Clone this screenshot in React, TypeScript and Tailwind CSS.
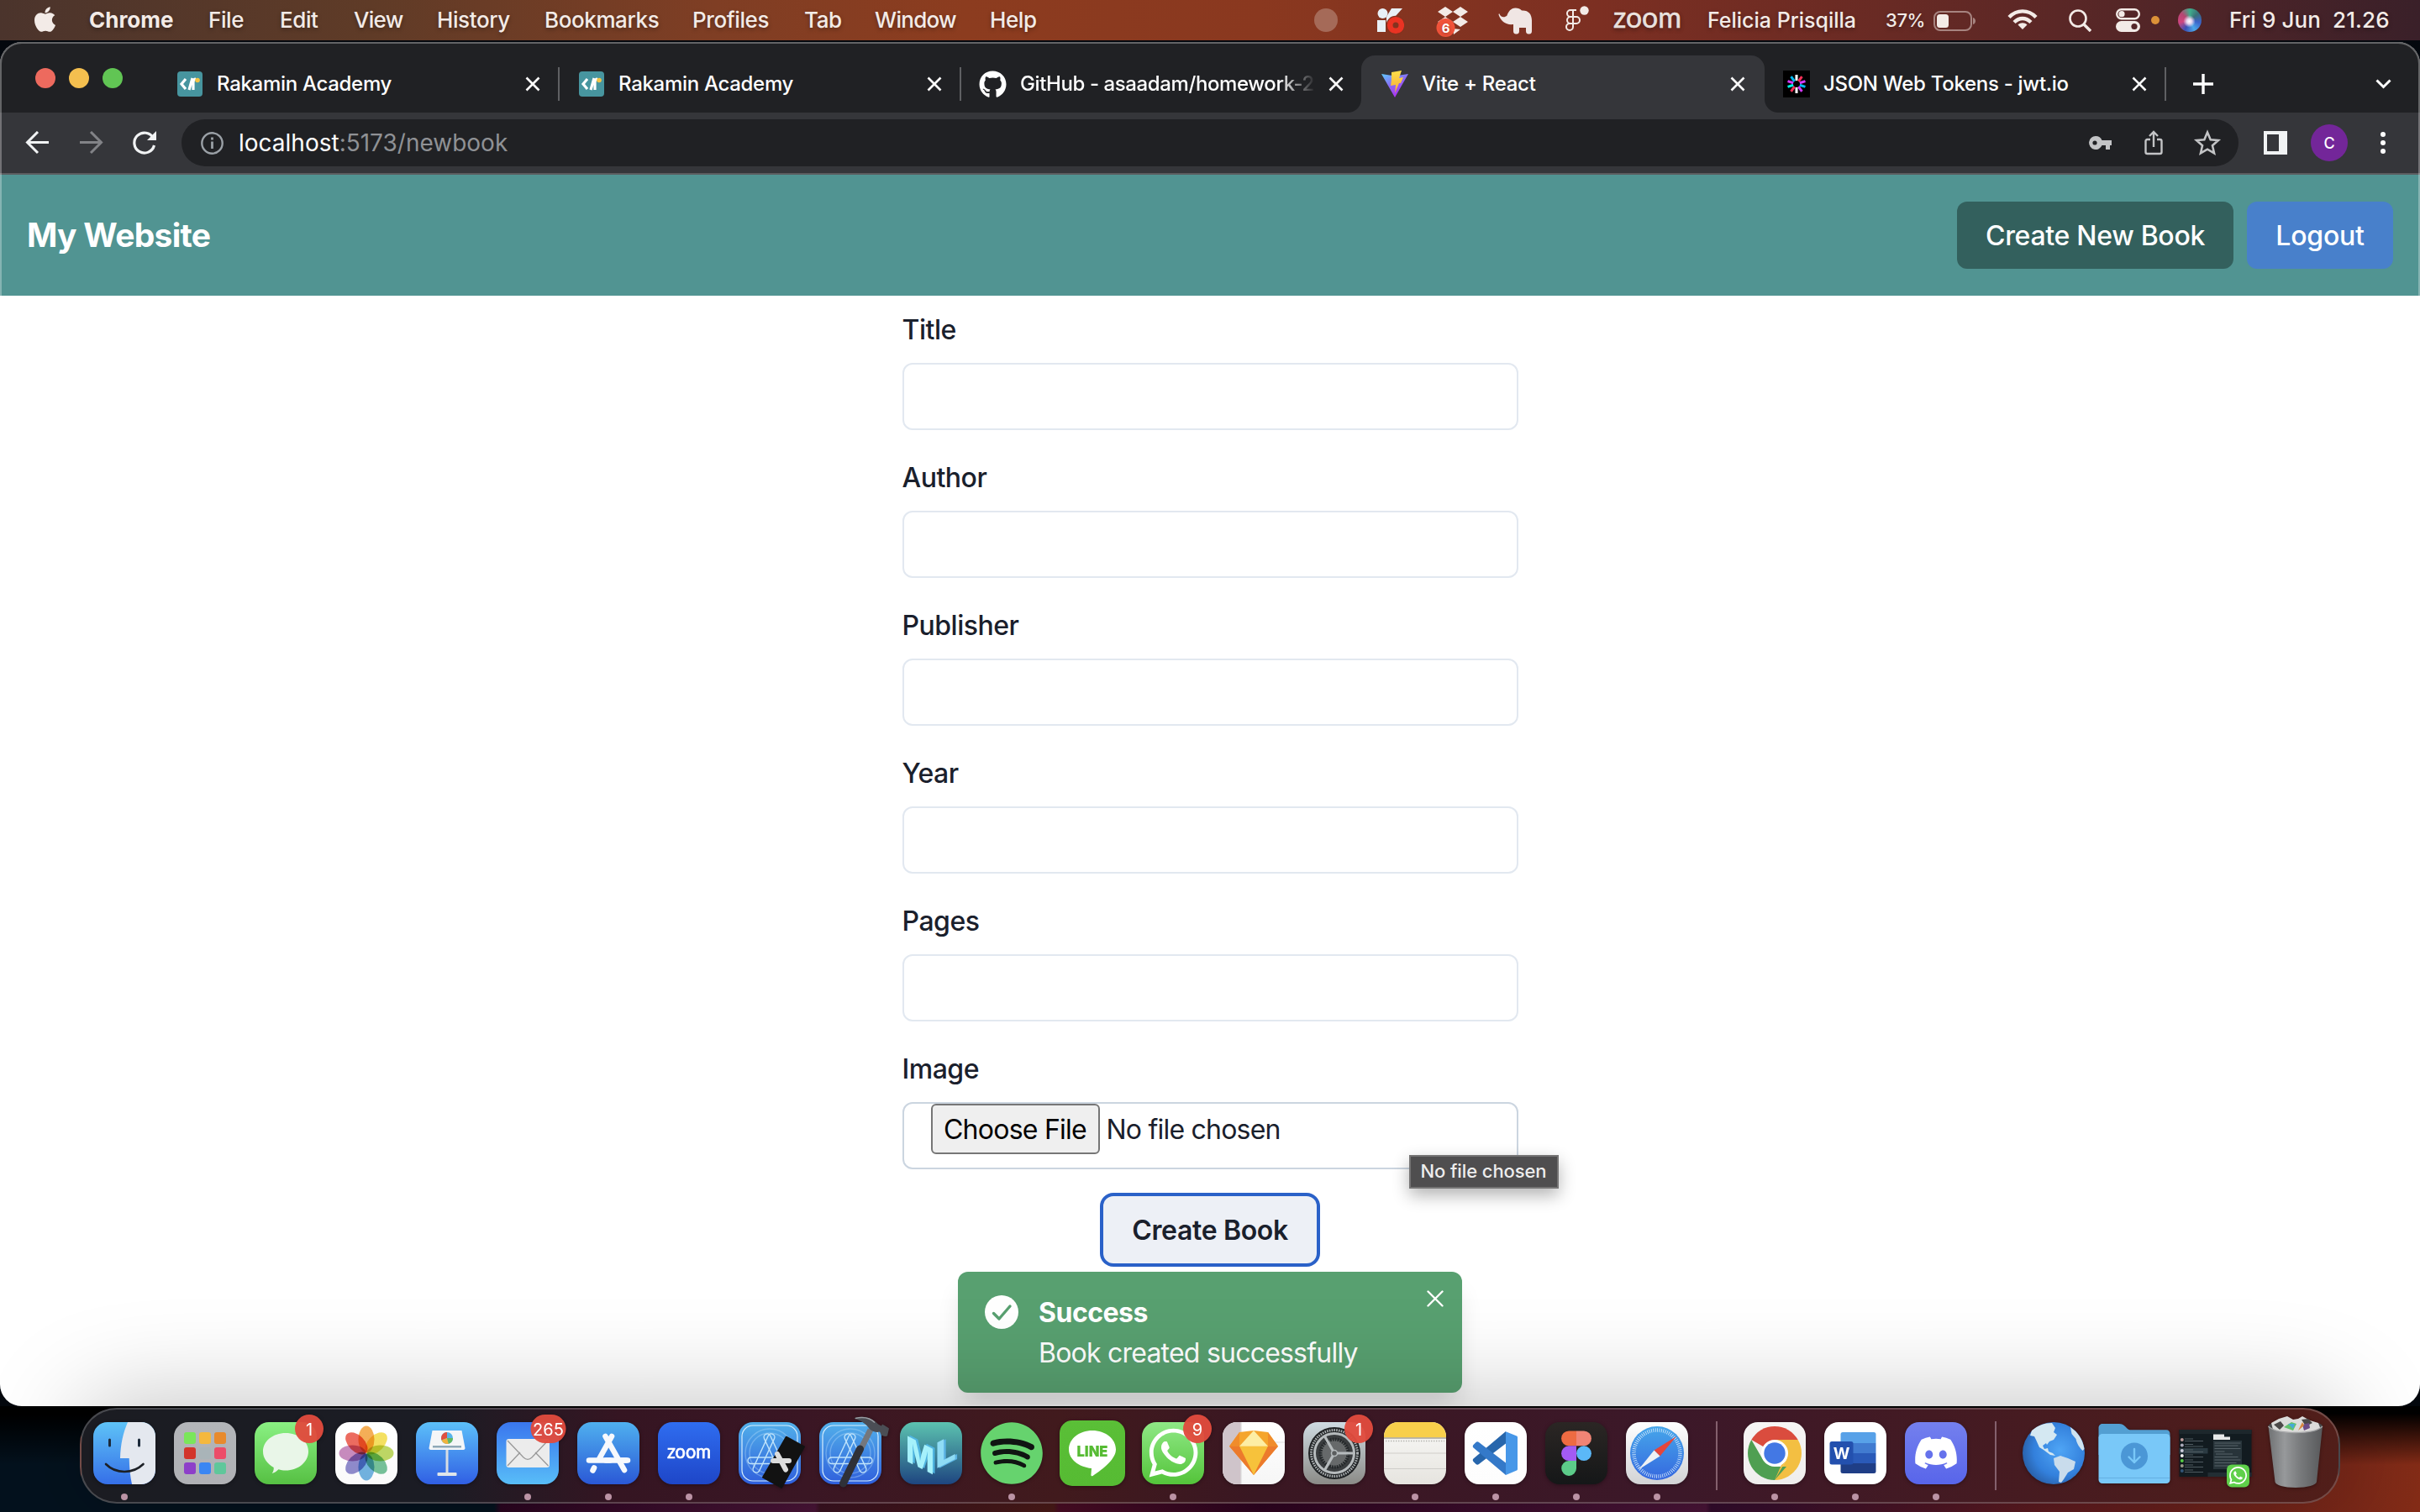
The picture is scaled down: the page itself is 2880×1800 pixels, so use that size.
import React from "react";
import { FaApple, FaGithub, FaSpotify, FaDiscord, FaWhatsapp } from "react-icons/fa";

/* ---------- shared drawing helpers ---------- */

function Tile({ id, a, b, x = 11, s = 74, r = 17 }: { id: string; a: string; b: string; x?: number; s?: number; r?: number }) {
  return (
    <>
      <defs>
        <linearGradient id={id} x1="0" y1="0" x2="0" y2="1">
          <stop offset="0" stopColor={a} />
          <stop offset="1" stopColor={b} />
        </linearGradient>
      </defs>
      <rect x={x} y={x} width={s} height={s} rx={r} fill={`url(#${id})`} />
    </>
  );
}

function Close() {
  return (
    <svg className="h-[18px] w-[18px] shrink-0" viewBox="0 0 18 18" stroke="#fff" strokeWidth="2.6" fill="none">
      <path d="M1.5 1.5 16.5 16.5M16.5 1.5 1.5 16.5" />
    </svg>
  );
}

/* ---------- menu bar ---------- */

function MenuBar() {
  return (
    <header className="flex h-12 shrink-0 items-start bg-[linear-gradient(90deg,#4b342c_0px,#5f3b27_440px,#7f3e24_850px,#8c3c1f_1150px,#8a381f_1500px,#7c2f22_1900px,#682a24_2250px,#4c2428_2650px,#3a2029_2880px)] text-[26px] font-medium tracking-[-0.4px] text-[#f3ebe7] [text-shadow:0_2px_5px_rgba(0,0,0,.35)]">
      <div className="flex h-[46px] w-full items-center whitespace-nowrap">
        <div className="w-[105px] pl-[38px]">
          <FaApple className="h-[34px] w-[31px]" />
        </div>
        <span className="w-[143px] pl-px font-bold tracking-normal">Chrome</span>
        <span className="w-[85px]">File</span>
        <span className="w-[88px]">Edit</span>
        <span className="w-[99px] tracking-[-0.7px]">View</span>
        <span className="w-[128px]">History</span>
        <span className="w-[176px]">Bookmarks</span>
        <span className="w-[133px]">Profiles</span>
        <span className="w-[84px]">Tab</span>
        <span className="w-[137px] tracking-[-0.7px]">Window</span>
        <span className="w-[386px]">Help</span>
        <div className="w-[75px]"><div className="mt-[2px] h-7 w-7 rounded-full bg-[#a56a58]" /></div>
        <div className="w-[70px]">
          <svg className="mt-[4px] h-[32px] w-[32px]" viewBox="0 0 32 32">
            <circle cx="6.5" cy="7" r="6" fill="#e8f0f6" />
            <path d="M0 15h10v14H0zM17 1h13l-8 9-11 8v-7z" fill="#e8f0f6" />
            <circle cx="22" cy="21" r="11.2" fill="#84321f" />
            <circle cx="22" cy="21" r="6.8" fill="none" stroke="#ea3323" strokeWidth="6.6" />
          </svg>
        </div>
        <div className="w-[74px]">
          <svg className="mt-[5px] h-[38px] w-[40px]" viewBox="0 0 40 38">
            <path d="m11 1 9 6-9 6-9-6zM29 1l9 6-9 6-9-6zM29 13l9 6-9 6-9-6zM11 13l9 6-9 6-9-6zM20 27l9 1-8 6z" fill="#f3ebe7" />
            <circle cx="11.5" cy="26" r="11" fill="#f1533a" />
            <text x="11.5" y="31.5" fontFamily="Inter" fontSize="15" fontWeight="700" fill="#fff" textAnchor="middle">6</text>
          </svg>
        </div>
        <div className="w-[79px]">
          <svg className="mt-[3px] h-[34px] w-[42px]" viewBox="0 0 42 34" fill="#f0e6e4">
            <path d="M1.5 8.5c1 4 6 5 9 2C12 6 15 1.5 20.5 1.5c3 0 6 1 7.5 3 8-.5 12 4.500 12 12V29c0 2-1 3.500-3 3.500h-1c-2 0-3-1.500-3-3.500v-4h-8v4c0 2-1 3.500-3 3.500h-1c-2 0-3-1.500-3-3.500v-8C9 22 3 17 .5 9.500c0-1 .6-1.800 1-1z" />
          </svg>
        </div>
        <div className="w-[58px]">
          <svg className="h-[34px] w-[30px]" viewBox="0 0 30 34" fill="none" stroke="#f3ebe7" strokeWidth="2">
            <path d="M14 6H7a4 4 0 0 0 0 8h7M10 6v20a4 4 0 1 1-4-4h4M14 14H7a4 4 0 0 0 0 8h7a4 4 0 0 0 0-8z" />
            <circle cx="23.5" cy="6.5" r="5.2" fill="#f3ebe7" stroke="none" />
          </svg>
        </div>
        <div className="w-[112px]">
          <svg className="h-[46px] w-[92px] overflow-visible" viewBox="0 0 92 46">
            <text x="0" y="33" fontFamily="Lato" fontSize="35" fontWeight="400" fill="#f3ebe7" stroke="#f3ebe7" strokeWidth=".5" letterSpacing="0" textLength="81" lengthAdjust="spacingAndGlyphs">zoom</text>
          </svg>
        </div>
        <span className="mt-[4px] w-[212px] text-[25px] tracking-normal">Felicia Prisqilla</span>
        <span className="mt-[3px] w-[57px] text-[22px]">37%</span>
        <div className="w-[88px]">
          <svg className="mt-[3px] h-[24px] w-[52px]" viewBox="0 0 52 24">
            <rect x="1" y="1" width="44" height="22" rx="7" fill="none" stroke="#a78480" strokeWidth="2" />
            <rect x="4" y="4" width="14" height="16" rx="3.5" fill="#f3ebe7" />
            <path d="M47 8c4 1 4 7 0 8z" fill="#a78480" />
          </svg>
        </div>
        <div className="w-[73px]">
          <svg className="h-[26px] w-[36px]" viewBox="0 0 36 26" fill="none" stroke="#f3ebe7" strokeWidth="4.4">
            <path d="M2 10.5C11 1 25 1 34 10.5M8 16.5c6-6 14-6 20 0" />
            <path d="m18 25-5.500-5.500c3-3 8-3 11 0z" fill="#f3ebe7" stroke="none" />
          </svg>
        </div>
        <div className="w-[56px]">
          <svg className="mt-[2px] h-[27px] w-[27px]" viewBox="0 0 27 27" fill="none" stroke="#f3ebe7" strokeWidth="2.6">
            <circle cx="11" cy="11" r="9.5" />
            <path d="m17.500 17.500 8.500 8.500" strokeWidth="3.4" />
          </svg>
        </div>
        <div className="w-[42px]">
          <svg className="mt-[1px] h-[28px] w-[29px]" viewBox="0 0 29 28">
            <rect x="1.200" y="1.200" width="26.600" height="11" rx="5.500" fill="none" stroke="#f3ebe7" strokeWidth="2.4" />
            <circle cx="7" cy="6.700" r="3.600" fill="#f3ebe7" />
            <rect y="15" width="29" height="13" rx="6.500" fill="#f3ebe7" />
            <circle cx="22" cy="21.500" r="3.600" fill="#55282a" />
          </svg>
        </div>
        <div className="w-[32px]"><div className="mt-[2px] h-[10px] w-[10px] rounded-full bg-[#dc9238]" /></div>
        <div className="w-[61px]">
          <div className="mt-[2px] h-7 w-7 rounded-full bg-[radial-gradient(circle_at_48%_55%,#fff_0,#e7d5ee_14%,transparent_34%),conic-gradient(from_0deg,#3fae8c,#3a6f78,#3b62c9,#4aa6e8,#3b51b5,#d0457f,#b54672,#3fae8c)]" />
        </div>
        <span className="tracking-[0.1px]">Fri 9 Jun&nbsp; 21.26</span>
      </div>
    </header>
  );
}

/* ---------- browser chrome ---------- */

function RakaminIcon() {
  return (
    <svg className="h-[30px] w-[30px] shrink-0" viewBox="0 0 30 30">
      <rect width="30" height="30" rx="4" fill="#47959f" />
      <path d="m10 9-5 6 5 6M18 8l-4 14M19 22v-9c0-3 1-4 3-4" fill="none" stroke="#fff" strokeWidth="3.2" />
      <circle cx="24" cy="10.5" r="2.8" fill="#f3c344" />
    </svg>
  );
}

function ViteIcon() {
  return (
    <svg className="h-8 w-8 shrink-0" viewBox="0 0 32 32">
      <defs>
        <linearGradient id="vt" x1="0" y1="0" x2=".6" y2="1"><stop stopColor="#5ecbff" /><stop offset=".5" stopColor="#8a6cf5" /><stop offset="1" stopColor="#b02bf0" /></linearGradient>
        <linearGradient id="vb" x1="0" y1="0" x2="0" y2="1"><stop stopColor="#ffe14a" /><stop offset="1" stopColor="#f5a83a" /></linearGradient>
      </defs>
      <path d="M0 4 16 6.500 32 4 16 32z" fill="url(#vt)" />
      <path d="M12 2 24 0l-3 9 5-1-3 7h-2l-5 12 1-10-6 1 1-7z" fill="url(#vb)" />
    </svg>
  );
}

function JwtIcon() {
  const c = ["#fff", "#fb3159", "#d63aff", "#00b9f1", "#d63aff", "#fff", "#fb3159", "#00f2e6", "#d63aff", "#00b9f1"];
  return (
    <svg className="h-8 w-8 shrink-0" viewBox="0 0 32 32">
      <rect width="32" height="32" fill="#000" />
      {c.map((k, i) => (
        <path key={i} d="M16 12V5" stroke={k} strokeWidth="3" transform={`rotate(${i * 36} 16 16)`} />
      ))}
    </svg>
  );
}

function TabStrip() {
  return (
    <div className="flex h-[84px] items-end bg-[#202124] text-[24px] font-medium tracking-[-0.3px] text-white">
      <div className="flex h-[82px] w-[188px] shrink-0 items-center gap-4 pl-[42px]">
        <span className="h-6 w-6 rounded-full bg-[#ed6a5e]" />
        <span className="h-6 w-6 rounded-full bg-[#f4bf4f]" />
        <span className="h-6 w-6 rounded-full bg-[#61c554]" />
      </div>
      <div className="flex h-[68px] w-[478px] shrink-0 items-center pl-[23px]">
        <RakaminIcon />
        <span className="ml-[17px] w-[367px] whitespace-nowrap">Rakamin Academy</span>
        <Close />
        <span className="ml-[21px] h-10 w-[2px] bg-[#5f6063]" />
      </div>
      <div className="flex h-[68px] w-[478px] shrink-0 items-center pl-[23px]">
        <RakaminIcon />
        <span className="ml-[17px] w-[367px] whitespace-nowrap">Rakamin Academy</span>
        <Close />
        <span className="ml-[21px] h-10 w-[2px] bg-[#5f6063]" />
      </div>
      <div className="flex h-[68px] w-[476px] shrink-0 items-center pl-[21px]">
        <FaGithub className="h-[33px] w-[33px] shrink-0" />
        <span className="mr-[11px] ml-[16px] w-[356px] overflow-hidden whitespace-nowrap tracking-[-0.4px] [mask-image:linear-gradient(90deg,#000_308px,transparent_352px)]">
          GitHub - asaadam/homework-2
        </span>
        <Close />
      </div>
      <div className="relative flex h-[68px] w-[480px] shrink-0 items-center rounded-t-2xl bg-[#35363a] pl-6">
        <span className="absolute bottom-0 left-[-16px] h-4 w-4 bg-[radial-gradient(circle_at_0_0,#202124_15.5px,#35363a_16.5px)]" />
        <span className="absolute right-[-16px] bottom-0 h-4 w-4 bg-[radial-gradient(circle_at_100%_0,#202124_15.5px,#35363a_16.5px)]" />
        <ViteIcon />
        <span className="ml-[16px] w-[367px] whitespace-nowrap">Vite + React</span>
        <Close />
      </div>
      <div className="flex h-[68px] w-[478px] shrink-0 items-center pl-[22px]">
        <JwtIcon />
        <span className="ml-[16px] w-[367px] whitespace-nowrap">JSON Web Tokens - jwt.io</span>
        <Close />
        <span className="ml-[21px] h-10 w-[2px] bg-[#5f6063]" />
      </div>
      <div className="flex h-[68px] flex-1 items-center justify-between pr-[34px] pl-8">
        <svg className="h-6 w-6" viewBox="0 0 24 24" stroke="#fff" strokeWidth="3.4"><path d="M12 0v24M0 12h24" /></svg>
        <svg className="h-[12px] w-[19px]" viewBox="0 0 19 12" fill="none" stroke="#fff" strokeWidth="3"><path d="m1.500 1.500 8 8 8-8" /></svg>
      </div>
    </div>
  );
}

function Toolbar() {
  return (
    <div className="flex h-[74px] items-center border-b-2 border-[#5c5d60] bg-[#35363a]">
      <svg className="ml-[30px] h-7 w-7" viewBox="0 0 28 28" fill="none" stroke="#f1f3f4" strokeWidth="3"><path d="M28 13.500H3M15 1 2.500 13.500 15 26" /></svg>
      <svg className="ml-[37px] h-7 w-7" viewBox="0 0 28 28" fill="none" stroke="#828387" strokeWidth="3"><path d="M0 13.500h25M13 1l12.500 12.500L13 26" /></svg>
      <svg className="ml-[35px] h-7 w-7" viewBox="0 0 28 28" fill="none" stroke="#f1f3f4" strokeWidth="3.2"><path d="M24.500 8.500A12 12 0 1 0 25.500 17" /><path d="M28 0v11H17z" fill="#f1f3f4" stroke="none" /></svg>
      <div className="ml-[30px] flex h-14 w-[2448px] items-center rounded-full bg-[#202124] pr-[20px] pl-[23px]">
        <svg className="h-[27px] w-[27px]" viewBox="0 0 27 27" fill="none" stroke="#9aa0a6" strokeWidth="2.4"><circle cx="13.500" cy="13.500" r="12.200" /><path d="M13.500 11.500V20M13.500 6.500v3" strokeWidth="2.8" /></svg>
        <span className="ml-[18px] text-[28px] whitespace-nowrap text-[#8f9195]">
          <span className="text-white">localhost</span>:5173/newbook
        </span>
        <div className="ml-auto flex items-center">
          <svg className="h-[18px] w-[28px]" viewBox="0 0 28 18" fill="#c3c4c6"><path fillRule="evenodd" d="M9 1a8 8 0 1 0 7.500 11H21v5h5v-5h2V6H16.500A8 8 0 0 0 9 1zm-1 5.400a2.600 2.600 0 1 1 0 5.200 2.600 2.600 0 0 1 0-5.200z" /></svg>
          <svg className="ml-[39px] h-[30px] w-[22px]" viewBox="0 0 22 30" fill="none" stroke="#c3c4c6" strokeWidth="2.4"><path d="M7 11H3.500a2 2 0 0 0-2 2v13a2 2 0 0 0 2 2h15a2 2 0 0 0 2-2V13a2 2 0 0 0-2-2H15M11 20V2.500M6 7l5-5 5 5" /></svg>
          <svg className="ml-[36px] h-[34px] w-[34px]" viewBox="0 0 24 24" fill="none" stroke="#c3c4c6" strokeWidth="1.8"><path d="m12 3.200 2.600 6.100 6.600.6-5 4.400 1.500 6.500-5.700-3.400-5.700 3.400 1.500-6.500-5-4.400 6.600-.6z" /></svg>
        </div>
      </div>
      <svg className="ml-[30px] h-7 w-7" viewBox="0 0 28 28"><path fillRule="evenodd" d="M0 0h28v28H0zM4 4v20h14V4z" fill="#f1f3f4" /></svg>
      <span className="ml-[28px] flex h-11 w-11 items-center justify-center rounded-full bg-[#732699] text-[18px] font-medium text-white">C</span>
      <span className="ml-[39px] flex flex-col gap-1">
        <i className="h-[6px] w-[6px] rounded-full bg-white" />
        <i className="h-[6px] w-[6px] rounded-full bg-white" />
        <i className="h-[6px] w-[6px] rounded-full bg-white" />
      </span>
    </div>
  );
}

/* ---------- page ---------- */

function Field({ label, children, file }: { label: string; children?: React.ReactNode; file?: boolean }) {
  return (
    <div className="flex flex-col gap-4">
      <label className="h-12 pt-px text-[32px] leading-[48px] font-medium tracking-[-0.5px] text-[#1a202c]">{label}</label>
      <div className={file ? "relative flex h-20 items-start rounded-xl border-2 border-[#cbd5e0] pl-8" : "h-20 rounded-xl border-2 border-[#e2e8f0]"}>{children}</div>
    </div>
  );
}

function BookForm() {
  return (
    <form className="mx-auto mt-4 flex w-[733px] flex-col gap-8">
      {["Title", "Author", "Publisher", "Year", "Pages"].map((l) => (
        <Field key={l} label={l} />
      ))}
      <Field label="Image" file>
        <span className="flex h-[60px] w-[201px] items-center justify-center rounded-md border-2 border-[#767676] bg-[#efefef] pt-[2px] text-[32px] tracking-[-0.75px] whitespace-nowrap text-black">Choose File</span>
        <span className="ml-[8px] flex h-[60px] items-center pt-[2px] text-[32px] tracking-[-0.78px] whitespace-nowrap text-[#1a202c]">No file chosen</span>
        <span className="absolute top-[61px] left-[601px] flex h-10 w-[178px] items-center justify-center border-2 border-[#757474] bg-[#4f4e4f] pb-px text-[22px] font-medium tracking-[-0.1px] whitespace-nowrap text-[#ededed] shadow-[0_8px_20px_rgba(0,0,0,.3)]">
          No file chosen
        </span>
      </Field>
      <button type="button" className="mx-auto h-20 w-[254px] rounded-xl bg-[#edf0f6] pt-[2px] text-[32px] font-semibold tracking-[-0.35px] text-[#1a202c] shadow-[0_0_0_4px_#2a61c8]">Create Book</button>
    </form>
  );
}

function Toast() {
  return (
    <div className="absolute top-[1464px] left-[1140px] flex h-[144px] w-[600px] rounded-xl bg-[#58a070] pt-6 pl-8 text-white shadow-[0_20px_30px_-6px_rgba(0,0,0,.14)]">
      <svg className="mt-[4px] h-10 w-10" viewBox="0 0 40 40"><circle cx="20" cy="20" r="20" fill="#fff" /><path d="m10.500 21.500 6.500 6.500 13-15" fill="none" stroke="#58a070" strokeWidth="3.4" strokeLinecap="round" strokeLinejoin="round" /></svg>
      <div className="ml-6 pt-px text-[32px] leading-[48px] whitespace-nowrap">
        <p className="font-bold tracking-[-0.5px]">Success</p>
        <p className="tracking-[-0.78px]">Book created successfully</p>
      </div>
      <svg className="absolute top-[22px] right-[22px] h-5 w-5" viewBox="0 0 20 20" stroke="#fff" strokeWidth="2.4" strokeLinecap="round"><path d="m1.500 1.500 17 17M18.500 1.500l-17 17" /></svg>
    </div>
  );
}

function BrowserWindow() {
  return (
    <main className="relative mt-[2px] flex h-[1624px] shrink-0 flex-col overflow-hidden rounded-[26px] bg-white">
      <TabStrip />
      <Toolbar />
      <nav className="flex h-[144px] shrink-0 items-center bg-[#519492] pr-8 pl-8 text-white">
        <span className="pt-px text-[39px] font-bold tracking-[-0.7px]">My Website</span>
        <button type="button" className="ml-auto h-20 w-[329px] rounded-xl bg-[#33605d] pt-[2px] text-[32px] font-medium tracking-[-0.3px]">Create New Book</button>
        <button type="button" className="ml-4 h-20 w-[174px] rounded-xl bg-[#4880cb] pt-[2px] text-[32px] font-medium tracking-[-0.2px]">Logout</button>
      </nav>
      <BookForm />
      <Toast />
      <div className="pointer-events-none absolute inset-0 rounded-[26px] border-2 border-white/30" />
    </main>
  );
}

/* ---------- dock ---------- */

function Badge({ n, w = 34, x = 66 }: { n: string; w?: number; x?: number }) {
  return (
    <>
      <rect x={x + 11 - w / 2} y="2" width={w} height="34" rx="17" fill="#e14b3d" opacity=".96" />
      <text x={x + 11} y="26.500" fontFamily="Inter" fontSize="20" fill="#fff" textAnchor="middle">{n}</text>
    </>
  );
}

function BlueprintA() {
  return (
    <g fill="none" stroke="#bfe3fb" strokeWidth="1.4">
      <rect x="15" y="15" width="66" height="66" rx="13" stroke="#d8effd" strokeWidth="1.2" />
      <circle cx="48" cy="48" r="29" opacity=".35" />
      <circle cx="48" cy="48" r="24" opacity=".35" />
      <g strokeLinejoin="round">
        <rect x="-4" y="-25" width="8" height="50" rx="4" transform="translate(41 48) rotate(25)" />
        <rect x="-4" y="-25" width="8" height="50" rx="4" transform="translate(54 48) rotate(-25)" />
        <rect x="22" y="53" width="52" height="7.500" rx="3.700" />
      </g>
    </g>
  );
}

const launchColors = ["#7ae65a", "#f5b83e", "#e88a2d", "#d3342a", "#a9b4b8", "#ec4c68", "#8d3fc9", "#3a86f3", "#5fc79b"];
const petals = ["#f3a13a", "#f3dc45", "#b4d14a", "#5fb98a", "#5aa7dd", "#7d78c6", "#c078b4", "#ea5244"];

type DockApp = { name: string; dot?: boolean; art: React.ReactNode };

const main: DockApp[] = [
  { name: "Finder", dot: true, art: (<>
    <Tile id="d1" a="#5ec3f7" b="#356fe8" />
    <path d="M52 11h16a17 17 0 0 1 17 17v40a17 17 0 0 1-17 17H57c-2-9-3-19-3.300-31H43c.5-17 3.500-30 9-43z" fill="#e4e8ef" />
    <path d="M30.500 32v7M65.500 32v7" stroke="#1c2a3a" strokeWidth="3" strokeLinecap="round" />
    <path d="M26 61c12 12 32 12 44.500 0" fill="none" stroke="#1c2026" strokeWidth="2.6" strokeLinecap="round" />
  </>) },
  { name: "Launchpad", art: (<>
    <Tile id="d2" a="#b3b5b9" b="#b0b1b5" />
    {launchColors.map((c, i) => <rect key={c} x={23 + (i % 3) * 18} y={23 + Math.floor(i / 3) * 18} width="14" height="14" rx="3" fill={c} />)}
  </>) },
  { name: "Messages", art: (<>
    <Tile id="d3" a="#8af183" b="#56c043" />
    <path d="M48 24c15 0 27 9.500 27 22S63 68.500 48 68.500c-3 0-6-.4-8.600-1.200-2 2.200-4.600 4-7.700 4.600 1.500-2 2.300-4.300 2-7C26 60.500 21 54 21 46c0-12.500 12-22 27-22z" fill="#e9f6e8" />
    <Badge n="1" x={65} />
  </>) },
  { name: "Photos", art: (<>
    <Tile id="d4" a="#ffffff" b="#fafafa" />
    {petals.map((c, i) => <ellipse key={c} cx="48" cy="31.500" rx="9.500" ry="16" fill={c} fillOpacity=".85" className="mix-blend-multiply" transform={`rotate(${i * 45} 48 48)`} />)}
  </>) },
  { name: "Keynote", art: (<>
    <Tile id="d5" a="#5cc0f9" b="#305fe4" />
    <path d="M30.500 21h35l4 21c0 1-1 2-2 2h-39c-1 0-2-1-2-2z" fill="#f4f6f8" />
    <path d="M31 39h34v2.500H31z" fill="#8fa9b8" />
    <circle cx="48" cy="30" r="7" fill="#56b4e8" />
    <path d="M48 30v-7a7 7 0 0 0-6.500 9.500z" fill="#e0503f" /><path d="m48 30-6.500 2.500A7 7 0 0 0 50 36.700z" fill="#f0b33d" /><path d="M48 30l2 6.700a7 7 0 0 0 5-6.700z" fill="#63b860" />
    <path d="M46.500 44h3v27h-3z" fill="#d6dde4" /><rect x="36.500" y="71" width="23" height="4" rx="1" fill="#dfe5ea" />
  </>) },
  { name: "Mail", dot: true, art: (<>
    <Tile id="d6" a="#3a76ee" b="#58bdf8" />
    <rect x="22.500" y="31" width="51.500" height="34" rx="3" fill="#ececec" />
    <path d="M24 63l15-16M72.500 63 57 47M24 33l19 20c3 3 7 3 10 0l19-20" fill="none" stroke="#999" strokeWidth="1.3" />
    <Badge n="265" w={42} x={61.5} />
  </>) },
  { name: "App Store", dot: true, art: (<>
    <Tile id="d7" a="#4fb0ef" b="#2a58d6" />
    <g stroke="#f6f9fd" strokeWidth="6.6" strokeLinecap="round">
      <path d="M52 28 37.500 54M31 65.500l-1.500 3M44.500 28 67 68M25 56.500h25M61 56.500h10" /><path d="M45 56.500h24" />
    </g>
  </>) },
  { name: "Zoom", dot: true, art: (<>
    <Tile id="d8" a="#2f6df0" b="#1e46c8" />
    <text x="22" y="53.500" fontFamily="Lato" fontSize="23.500" fontWeight="400" fill="#fff" stroke="#fff" strokeWidth=".7" textLength="52" lengthAdjust="spacingAndGlyphs">zoom</text>
  </>) },
  { name: "Simulator", art: (<>
    <Tile id="d9" a="#52b0ea" b="#2f5fdc" />
    <BlueprintA />
    <path d="M67.700 28.700 89 40.300 62 89 40 76.700z" fill="#121212" stroke="#121212" strokeWidth="2" strokeLinejoin="round" />
    <path d="M57 49l10 18.500M52 57h19" stroke="#dcdcdc" strokeWidth="6" strokeLinecap="round" />
  </>) },
  { name: "Xcode", art: (<>
    <Tile id="d10" a="#52b0ea" b="#2f5fdc" />
    <BlueprintA />
    <path d="M72 20 58 48" stroke="#74777d" strokeWidth="7" />
    <path d="M59.500 43 39.500 84" stroke="#2f3138" strokeWidth="9" strokeLinecap="round" />
    <path d="M52 6.500c9-3 19-2 26 4 2 2 4 4 7 5l1-2c3 2 6 3 8 5l-2 9c-3 1-5 0-7-1l-2-4c-4 1-8 0-12-3-4-6-9-10-19-13z" fill="#4b4e55" />
    <path d="M54 6.500c9-2 17-1 23 5" fill="none" stroke="#9a9da3" strokeWidth="1.5" />
  </>) },
  { name: "Create ML", art: (<>
    <Tile id="d11" a="#5cc3b0" b="#1e4580" />
    <g fontFamily="Inter" fontWeight="800">
      <text transform="translate(20.500 56) skewY(27)" fontSize="42" fill="#4fb4e0" textLength="34" lengthAdjust="spacingAndGlyphs">M</text>
      <text transform="translate(18 57) skewY(27)" fontSize="42" fill="#a5f1fb" textLength="34" lengthAdjust="spacingAndGlyphs">M</text>
      <text transform="translate(55.500 67) skewY(-27)" fontSize="42" fill="#5cb4e4" textLength="25" lengthAdjust="spacingAndGlyphs">L</text>
      <text transform="translate(53 67) skewY(-27)" fontSize="42" fill="#8fdcf5" textLength="25" lengthAdjust="spacingAndGlyphs">L</text>
    </g>
  </>) },
  { name: "Spotify", dot: true, art: (<>
    <circle cx="48" cy="48" r="36" fill="#101512" />
    <FaSpotify x="10" y="10" size={76} color="#66d36e" />
  </>) },
  { name: "LINE", art: (<>
    <Tile id="d13" a="#5abf37" b="#56bb33" x={9} s={78} r={15} />
    <path d="M48 21c15.500 0 28 9.800 28 22.500 0 11-14 22.500-27.500 31.500-2 1-2.300-.5-2-2.500l.5-6.500C31.500 64.500 20 55 20 43.500 20 30.800 32.500 21 48 21z" fill="#fff" />
    <text x="29.500" y="51.500" fontFamily="Inter" fontSize="18" fontWeight="900" fill="#56bb33" textLength="37" lengthAdjust="spacingAndGlyphs">LINE</text>
  </>) },
  { name: "WhatsApp", dot: true, art: (<>
    <Tile id="d14" a="#8fe886" b="#54c43a" />
    <FaWhatsapp x="15.500" y="14.500" size={66} color="#fff" />
    <Badge n="9" />
  </>) },
  { name: "Sketch", art: (<>
    <Tile id="d15" a="#ffffff" b="#f6f6f6" />
    <path d="M28 11h5v74h-5a17 17 0 0 1-17-17V28a17 17 0 0 1 17-17z" fill="#cfc4ca" />
    <path d="M33 11v74M33 35h52" stroke="#ddd" strokeWidth="1.2" />
    <path d="M19 39.700 31 23l17-2 17 2 12 16.700L48 74z" fill="#f5a52c" />
    <path d="M31 39.700h34L48 74z" fill="#f7c23b" /><path d="M48 21 31 39.700h34z" fill="#fdeea4" /><path d="m31 23-12 16.700h12zM65 23l12 16.700H65z" fill="#f08c2b" />
    <path d="M19 39.700h12L48 74zM77 39.700H65L48 74z" fill="#ec7a2c" />
  </>) },
  { name: "System Settings", art: (<>
    <Tile id="d16" a="#cfdbe2" b="#8b8b87" />
    <circle cx="48" cy="48" r="31" fill="#1f2224" />
    <circle cx="48" cy="48" r="27.500" fill="none" stroke="#a9aeb0" strokeWidth="3" strokeDasharray="1.6 1.2" />
    <circle cx="48" cy="48" r="23.500" fill="#3a3d3f" stroke="#b6bbbd" strokeWidth="3" />
    <circle cx="48" cy="48" r="16.500" fill="#66696a" stroke="#24282a" strokeWidth="4" strokeDasharray="1.8 1.2" />
    <path d="M48 48h24M48 48 36 27M48 48 36 69" stroke="#b6bbbd" strokeWidth="3.2" />
    <circle cx="48" cy="48" r="3.500" fill="#5a5d5e" stroke="#b6bbbd" strokeWidth="1.5" />
    <Badge n="1" />
  </>) },
  { name: "Notes", dot: true, art: (<>
    <Tile id="d17" a="#f9f9f7" b="#e6e4df" />
    <path d="M28 11h40a17 17 0 0 1 17 17v1.500H11V28a17 17 0 0 1 17-17z" fill="#f8cf4b" />
    <path d="M11 30h74" stroke="#a8a49a" strokeWidth="1.6" />
    <path d="M13 33.500h70" stroke="#b5b3ae" strokeWidth="1.4" strokeDasharray="1.4 1.6" />
    <path d="M11 48h74M11 66.500h74" stroke="#cfcdca" strokeWidth="1.2" />
  </>) },
  { name: "Visual Studio Code", dot: true, art: (<>
    <Tile id="d18" a="#ffffff" b="#fdfdfd" />
    <path d="M60 22v14.500L28 61c-1 1-2.500 1-3.500 0l-3-3c-1-1-1-2.500 0-3.500z" fill="#2766ac" />
    <path d="M60 74V59.500L28 35c-1-1-2.500-1-3.500 0l-3 3c-1 1-1 2.500 0 3.500z" fill="#3479c9" />
    <path d="M60 22.200 73 27.500c.8.300 1 1 1 1.700v37.600c0 .7-.2 1.400-1 1.700L60 74z" fill="#4797e8" />
  </>) },
  { name: "Figma", dot: true, art: (<>
    <Tile id="d19" a="#2b2624" b="#151718" />
    <path d="M48 21.500h-9a8.900 8.900 0 0 0 0 17.800h9z" fill="#ee6b42" /><path d="M48 21.500h9a8.900 8.900 0 0 1 0 17.800h-9z" fill="#f08475" />
    <path d="M48 39.300h-9a8.900 8.900 0 0 0 0 17.800h9z" fill="#a35bf3" /><circle cx="57" cy="48.200" r="8.900" fill="#5bb8f8" />
    <path d="M48 57.100h-9a8.900 8.900 0 1 0 9 8.900z" fill="#5ccb89" />
  </>) },
  { name: "Safari", dot: true, art: (<>
    <Tile id="d20" a="#ffffff" b="#d2d3d5" />
    <defs><linearGradient id="saf" x1="0" y1="0" x2="0" y2="1"><stop stopColor="#46a6ea" /><stop offset="1" stopColor="#3568df" /></linearGradient></defs>
    <circle cx="48" cy="48" r="32" fill="url(#saf)" />
    <circle cx="48" cy="48" r="27.500" fill="none" stroke="#d9ecfb" strokeWidth="4.5" strokeDasharray=".8 1.6" />
    <path d="M71 28 51.500 51.500l-7-7z" fill="#e5453b" /><path d="M26 67.500 44.500 44.500l7 7z" fill="#eef1f4" />
  </>) },
];

const extra: DockApp[] = [
  { name: "Chrome", dot: true, art: (<>
    <Tile id="e1" a="#f6f5f4" b="#efeeed" />
    <path d="M48 48 20.300 32A32 32 0 0 1 75.700 32z" fill="#da4c3e" />
    <path d="M48 32h27.700A32 32 0 0 1 48 80l14-24z" fill="#f3bf42" />
    <path d="M20.300 32 34.200 56 48 64h14L48 80A32 32 0 0 1 20.300 32z" fill="#4f9f52" />
    <path d="m48 80 14-24-6 6z" fill="#f3bf42" />
    <circle cx="48" cy="48" r="16" fill="#fff" /><circle cx="48" cy="48" r="12.700" fill="#4378e4" />
  </>) },
  { name: "Word", dot: true, art: (<>
    <Tile id="e2" a="#ffffff" b="#ffffff" />
    <path d="M33 23h37a2.500 2.500 0 0 1 2.500 2.500V36h-42V25.500A2.500 2.500 0 0 1 33 23z" fill="#58a1e8" />
    <path d="M30.500 36h42v12h-42z" fill="#417bd0" /><path d="M30.500 48h42v12h-42z" fill="#2a5ab8" />
    <path d="M30.500 60h42v9.500A2.500 2.500 0 0 1 70 72H33a2.500 2.500 0 0 1-2.500-2.500z" fill="#1f3e86" />
    <rect x="17.500" y="34" width="28" height="27.500" rx="2.500" fill="#2350ae" />
    <text x="31.500" y="54.500" fontFamily="Inter" fontSize="19" fontWeight="700" fill="#fff" textAnchor="middle">W</text>
  </>) },
  { name: "Discord", dot: true, art: (<>
    <Tile id="e3" a="#7480ee" b="#5865ea" />
    <FaDiscord x="21" y="20.500" size={54} color="#fff" />
  </>) },
];

const tail: DockApp[] = [
  { name: "Globe", art: (<>
    <defs><radialGradient id="gl" cx=".6" cy=".45" r=".6"><stop stopColor="#4fa5f5" /><stop offset=".7" stopColor="#3380dc" /><stop offset="1" stopColor="#2a63ad" /></radialGradient></defs>
    <circle cx="48" cy="48" r="37" fill="url(#gl)" />
    <path d="M22 21c7-6 15-9 24-9l4 6-2 5 4 3-4 6-5 2-3 4-1-2-4 3 2 4 4-1 1 4 5 2 3 3-6-1-8-6-5-3-4-9-2-4-5-1z" fill="#d4e8f2" />
    <path d="M48 54l8-3 9 3 9 4-2 9-7 4-5 8-3 4-3-1 1-12-6-8z" fill="#c9dcec" />
    <path d="M68 17c9 6 15 15 16.500 26l-2 2c-3-3-7-8-8-14l-5-6z" fill="#cfe3f0" />
  </>) },
  { name: "Downloads", art: (<>
    <path d="M5.500 18c0-3 2-5 5-5H30c3 0 5 1 7 3l3 3c1 1 2 1.200 4 1.200h42c3 0 4.500 2 4.500 5V50h-85z" fill="#539fd2" />
    <rect x="5.500" y="25" width="85" height="59" rx="4.500" fill="#79c8f8" />
    <path d="M6 77.500h84" stroke="#64b0e2" strokeWidth="1.2" />
    <circle cx="48" cy="51.500" r="16" fill="#4b97d6" />
    <path d="M48 43v16M41.500 52.500 48 59l6.500-6.500" fill="none" stroke="#79c8f8" strokeWidth="2.4" strokeLinecap="round" strokeLinejoin="round" />
  </>) },
  { name: "Minimised chat", art: (<>
    <rect x="5.500" y="20" width="86" height="56" fill="#121b20" />
    <path d="M5.500 42h34v6.500h-34z" fill="#2b3a42" /><path d="M39.500 25h52v-5h-86v5z" fill="#1d272c" />
    <path d="M46 25.500h13v3h7v3.500H46z" fill="#e8e8e8" /><path d="M46 33h34v34H46z" fill="#28343a" />
    <path d="M47.500 36h31M47.500 39h28M47.500 42.500h31M47.500 46h12M49 49h20M47.500 52.500h28M47.500 56h31M47.500 59.500h26M47.500 63h30" stroke="#566268" strokeWidth="1.1" />
    {[32, 38.5, 45, 51, 57, 63, 69].map((y, i) => (
      <g key={y}>
        <circle cx="8.800" cy={y} r="2" fill={["#b99", "#aab", "#ccd", "#eee", "#5c4", "#998", "#357"][i]} />
        <path d={`M12 ${y - 1}h10M12 ${y + 1.5}h22`} stroke="#566268" strokeWidth=".9" />
      </g>
    ))}
    <path d="M39.500 71h52v5h-52z" fill="#222e34" />
    <rect x="62" y="61.500" width="27" height="27" rx="6" fill="#5fd04a" />
    <FaWhatsapp x="63.500" y="62.500" size={24} color="#fff" />
  </>) },
  { name: "Trash", art: (<>
    <defs><linearGradient id="tr" x1="0" y1="0" x2="1" y2="0"><stop stopColor="#6f7173" /><stop offset=".3" stopColor="#97999b" /><stop offset=".6" stopColor="#77797b" /><stop offset="1" stopColor="#58595b" /></linearGradient></defs>
    <ellipse cx="47.700" cy="15.500" rx="32" ry="6.500" fill="#48494a" />
    <path d="m19 12 9-5 10-3 7 4 6-1 5-3 9 5 10 3 3 8-12 5H30l-9-5z" fill="#dcdcda" />
    <path d="m22 14 8-4 4 5-5 5zM55 8l5 8 8-4-5-5z" fill="#4c4a49" /><path d="m34 17 9-6 6 2-4 8z" fill="#63c26c" /><path d="m39 13 8 0-2 6z" fill="#46a9d8" /><path d="m56 14 8-2 1 6-7 3z" fill="#6b4c86" /><path d="m51 21 5-10 2 4z" fill="#d8873e" />
    <path d="M15.500 16c6 6 17 7.500 32.200 7.500S74 22 80 16l-7 66c-.5 4-11 7-25 7s-24-3-24.500-7z" fill="url(#tr)" />
    <path d="M15.500 16c6 6 17 7.500 32.200 7.500S74 22 80 16" fill="none" stroke="#a5a6a8" strokeWidth="1.4" />
  </>) },
];

function DockItems({ apps }: { apps: DockApp[] }) {
  return (
    <>
      {apps.map((a) => (
        <div key={a.name} className="flex w-24 flex-col items-center">
          <svg className="h-24 w-24 overflow-visible drop-shadow-[0_1px_2px_rgba(0,0,0,.35)]" viewBox="0 0 96 96" aria-label={a.name}>{a.art}</svg>
          {a.dot && <span className="h-2 w-2 rounded-full bg-[#bb93a5]" />}
        </div>
      ))}
    </>
  );
}

function Separator() {
  return (
    <div className="flex w-11 justify-center pt-[10px] pl-[2px]">
      <span className="h-[82px] w-[2px] bg-[#84606d]" />
    </div>
  );
}

function Dock() {
  return (
    <footer className="relative z-10 flex h-[126px] shrink-0 justify-center bg-[linear-gradient(180deg,#000_0px,#000_8px,transparent_70px),linear-gradient(90deg,#04121e_0px,#04121e_588px,#2b0520_596px,#4a1538_970px,#3a1220_976px,#4a1a18_1254px,#4a0d25_1260px,#2e0420_1500px,#4a1538_2030px,#330c2c_2036px,#3a0f2c_2120px,#5c1a20_2420px,#7a2818_2800px,#842c17_2880px)] pt-[2px]">
      <div className="flex h-[114px] w-[2690px] rounded-[44px] border-2 border-white/20 bg-[linear-gradient(90deg,#1b1c22_0px,#1b1c24_420px,#351522_640px,#3a1624_860px,#411a1d_1160px,#3a1722_1400px,#3c1829_1900px,#431a23_2200px,#511e19_2690px)] pt-[4px] pl-[3px] shadow-[0_-4px_120px_rgba(0,0,0,.26)]">
        <DockItems apps={main} />
        <Separator />
        <DockItems apps={extra} />
        <Separator />
        <DockItems apps={tail} />
      </div>
    </footer>
  );
}

export default function App() {
  return (
    <div className="flex h-[1800px] w-[2880px] flex-col overflow-hidden bg-[#04080e] font-['Inter',sans-serif]">
      <MenuBar />
      <BrowserWindow />
      <Dock />
    </div>
  );
}
